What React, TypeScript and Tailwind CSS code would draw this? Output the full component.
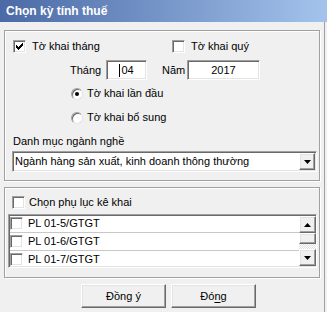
import { ReactNode } from 'react';

const sunken =
  'border border-t-[#a0a0a0] border-l-[#a0a0a0] border-r-white border-b-white shadow-[inset_1px_1px_0_#696969,inset_-1px_-1px_0_#e3e3e3]';
const raised =
  'border border-t-white border-l-white border-r-[#696969] border-b-[#696969] shadow-[inset_-1px_-1px_0_#a0a0a0,inset_1px_1px_0_#e3e3e3] bg-[#f0f0f0]';
const etched = 'border border-[#a0a0a0] shadow-[1px_1px_0_#ffffff,inset_1px_1px_0_#ffffff]';

function CheckBox({ checked = false }: { checked?: boolean }) {
  return (
    <span className={`w-[13px] h-[13px] bg-white shrink-0 flex items-center justify-center ${sunken}`}>
      {checked && (
        <svg width="7" height="7" viewBox="0 0 7 7">
          <path d="M0 2h1v1h1v1h1V3h1V2h1V1h1V0h1v3h-1v1h-1v1h-1v1h-1v1H2V6H1V5H0z" fill="#000" />
        </svg>
      )}
    </span>
  );
}

function Radio({ checked = false }: { checked?: boolean }) {
  return (
    <span className="w-[12px] h-[12px] rounded-full bg-white shrink-0 flex items-center justify-center border border-t-[#a0a0a0] border-l-[#a0a0a0] border-r-[#e3e3e3] border-b-[#e3e3e3] shadow-[inset_1px_1px_0_#696969]">
      {checked && <span className="w-[4px] h-[4px] rounded-full bg-black" />}
    </span>
  );
}

function Arrow({ dir }: { dir: 'up' | 'down' }) {
  return (
    <svg width="7" height="4" viewBox="0 0 7 4">
      <path d={dir === 'up' ? 'M3.5 0L7 4H0z' : 'M0 0h7L3.5 4z'} fill="#000" />
    </svg>
  );
}

function Row({ children, last = false }: { children: ReactNode; last?: boolean }) {
  return (
    <div className={`flex items-center ${last ? 'flex-1' : 'h-[18px] border-b border-[#c8c8c8]'}`}>
      {children}
    </div>
  );
}

const appendices = ['PL 01-5/GTGT', 'PL 01-6/GTGT', 'PL 01-7/GTGT'];

export default function App() {
  return (
    <div className="w-[327px] h-[312px] bg-[#f0f0f0] flex flex-col font-['Liberation_Sans',Arial,sans-serif] text-[11px] leading-[13px] text-black overflow-hidden">
      <div className="h-[22px] shrink-0 bg-linear-to-r from-[#4b6aa6] to-[#a4c3ec] flex items-center pl-[6px] text-white font-bold text-[12px]">
        Chọn kỳ tính thuế
      </div>

      <div className="flex flex-1">
        <div className="w-[325px] border-r border-[#a0a0a0] pl-[4px] pt-[8px] flex flex-col">
          {/* Group 1 */}
          <div className={`w-[316px] h-[151px] ${etched} flex flex-col`}>
            <div className="flex items-center mt-[9px] ml-[8px]">
              <div className="w-[159px] flex items-center gap-[6px]">
                <CheckBox checked />
                <span>Tờ khai tháng</span>
              </div>
              <div className="flex items-center gap-[6px]">
                <CheckBox />
                <span>Tờ khai quý</span>
              </div>
            </div>

            <div className="flex items-center mt-[7px] ml-[65px]">
              <span className="w-[36px]">Tháng</span>
              <div className={`w-[41px] h-[20px] bg-white flex items-center justify-center ${sunken}`}>
                <span className="w-px h-[13px] bg-black mr-[1px]" />
                <span>04</span>
              </div>
              <span className="w-[25px] ml-[15px]">Năm</span>
              <div className={`w-[73px] h-[20px] bg-white flex items-center justify-center ${sunken}`}>
                2017
              </div>
            </div>

            <div className="flex items-center gap-[4px] mt-[7px] ml-[66px]">
              <Radio checked />
              <span>Tờ khai lần đầu</span>
            </div>
            <div className="flex items-center gap-[4px] mt-[11px] ml-[66px]">
              <Radio />
              <span>Tờ khai bổ sung</span>
            </div>

            <div className="mt-[11px] ml-[8px]">Danh mục ngành nghề</div>

            <div className={`mt-[3px] ml-[7px] w-[305px] h-[21px] bg-white flex items-center ${sunken}`}>
              <span className="flex-1 pl-[2px]">Ngành hàng sản xuất, kinh doanh thông thường</span>
              <span className={`w-[16px] h-[17px] mr-[1px] flex items-center justify-center ${raised}`}>
                <Arrow dir="down" />
              </span>
            </div>
          </div>

          {/* Group 2 */}
          <div className={`w-[316px] h-[91px] mt-[6px] ${etched} flex flex-col`}>
            <div className="flex items-center gap-[4px] mt-[8px] ml-[7px]">
              <CheckBox />
              <span>Chọn phụ lục kê khai</span>
            </div>
            <div className={`mt-[5px] ml-[3px] w-[309px] h-[54px] bg-white flex ${sunken}`}>
              <div className="flex-1 flex flex-col pl-px">
                {appendices.map((p, i) => (
                  <Row key={p} last={i === appendices.length - 1}>
                    <div className="flex items-center gap-[5px]">
                      <CheckBox />
                      <span>{p}</span>
                    </div>
                  </Row>
                ))}
              </div>
              <div className="w-[17px] flex flex-col py-px">
                <span className={`h-[17px] flex items-center justify-center ${raised}`}>
                  <Arrow dir="up" />
                </span>
                <span className={`h-[11px] ${raised}`} />
                <span className="flex-1 bg-[repeating-conic-gradient(#ffffff_0%_25%,#e0e0e0_0%_50%)] bg-size-[2px_2px]" />
                <span className={`h-[17px] flex items-center justify-center ${raised}`}>
                  <Arrow dir="down" />
                </span>
              </div>
            </div>
          </div>

          {/* Buttons */}
          <div className="flex gap-[5px] mt-[6px] ml-[77px]">
            <button className={`w-[85px] h-[24px] ${raised} flex items-center justify-center`}>Đồng ý</button>
            <button className={`w-[85px] h-[24px] ${raised} flex items-center justify-center`}>
              Đó<span className="underline decoration-skip-ink-none underline-offset-2">n</span>g
            </button>
          </div>
        </div>
      </div>
    </div>
  );
}
